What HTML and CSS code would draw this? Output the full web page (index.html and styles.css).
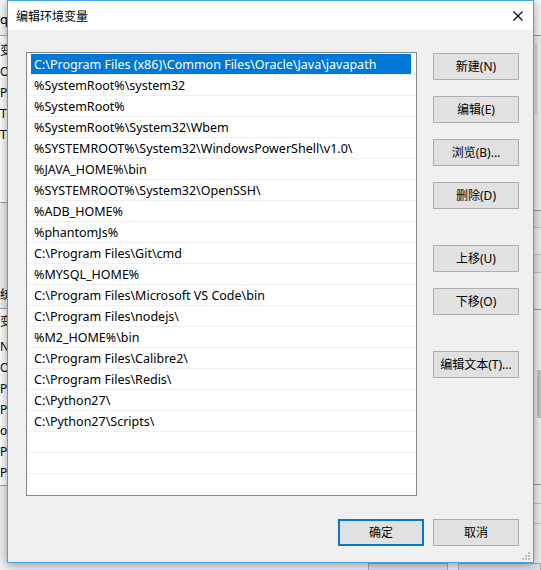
FILE: index.html
```html
<!DOCTYPE html>
<html lang="zh-CN">
<head>
<meta charset="utf-8">
<title>编辑环境变量</title>
<link rel="stylesheet" href="styles.css">
</head>
<body>
<div class="desktop">
  <div class="bgwin">
    <div class="bg-top">
      <div class="bg-left">
        <div class="bl-head">qi</div>
        <div class="bl-list bl-list1">
          <div class="bl-row">变</div>
          <div class="bl-row">O</div>
          <div class="bl-row">Pa</div>
          <div class="bl-row">TE</div>
          <div class="bl-row">TM</div>
        </div>
        <div class="bl-label">统</div>
        <div class="bl-list bl-list2">
          <div class="bl-row bl-first">变</div>
          <div class="bl-row">N</div>
          <div class="bl-row">O</div>
          <div class="bl-row">Pa</div>
          <div class="bl-row">PA</div>
          <div class="bl-row">ol</div>
          <div class="bl-row">PR</div>
          <div class="bl-row">PR</div>
        </div>
      </div>
      <div class="bg-mid"></div>
      <div class="bg-right">
        <div class="br-head"></div>
        <div class="br-box br-a"><span class="br-track"></span></div>
        <div class="br-line br-b"></div>
        <div class="br-line br-c"></div>
        <div class="br-line br-d"></div>
        <div class="br-line br-e"></div>
        <div class="br-box br-f"><span class="br-thumb"></span></div>
        <div class="br-line br-g"></div>
        <div class="br-line br-h"></div>
      </div>
    </div>
    <div class="bg-bottom">
      <div class="bg-btn"></div>
      <div class="bg-btn bg-btn-wide"></div>
    </div>
  </div>

  <div class="dialog">
    <div class="titlebar">
      <span class="title">编辑环境变量</span>
      <svg class="close" width="10" height="10" viewBox="0 0 10 10" aria-hidden="true">
        <path d="M0.5 0.5 L9.5 9.5 M9.5 0.5 L0.5 9.5" stroke="#000" stroke-width="1.1" fill="none"/>
      </svg>
    </div>
    <div class="dbody">
      <div class="main">
        <div class="list">
          <div class="row sel"><span class="cell">C:\Program Files (x86)\Common Files\Oracle\Java\javapath</span></div>
          <div class="row"><span class="cell">%SystemRoot%\system32</span></div>
          <div class="row"><span class="cell">%SystemRoot%</span></div>
          <div class="row"><span class="cell">%SystemRoot%\System32\Wbem</span></div>
          <div class="row"><span class="cell">%SYSTEMROOT%\System32\WindowsPowerShell\v1.0\</span></div>
          <div class="row"><span class="cell">%JAVA_HOME%\bin</span></div>
          <div class="row"><span class="cell">%SYSTEMROOT%\System32\OpenSSH\</span></div>
          <div class="row"><span class="cell">%ADB_HOME%</span></div>
          <div class="row"><span class="cell">%phantomJs%</span></div>
          <div class="row"><span class="cell">C:\Program Files\Git\cmd</span></div>
          <div class="row"><span class="cell">%MYSQL_HOME%</span></div>
          <div class="row"><span class="cell">C:\Program Files\Microsoft VS Code\bin</span></div>
          <div class="row"><span class="cell">C:\Program Files\nodejs\</span></div>
          <div class="row"><span class="cell">%M2_HOME%\bin</span></div>
          <div class="row"><span class="cell">C:\Program Files\Calibre2\</span></div>
          <div class="row"><span class="cell">C:\Program Files\Redis\</span></div>
          <div class="row"><span class="cell">C:\Python27\</span></div>
          <div class="row"><span class="cell">C:\Python27\Scripts\</span></div>
          <div class="row"><span class="cell"></span></div>
          <div class="row"><span class="cell"></span></div>
          <div class="row"><span class="cell"></span></div>
        </div>
        <div class="btncol">
          <div class="btn">新建(N)</div>
          <div class="btn">编辑(E)</div>
          <div class="btn">浏览(B)...</div>
          <div class="btn">删除(D)</div>
          <div class="btn btn-sep">上移(U)</div>
          <div class="btn">下移(O)</div>
          <div class="btn btn-sep">编辑文本(T)...</div>
        </div>
      </div>
      <div class="footer">
        <div class="btn btn-default">确定</div>
        <div class="btn">取消</div>
      </div>
    </div>
    <svg class="grip" width="9" height="9" viewBox="0 0 9 9" aria-hidden="true">
      <rect x="6" y="0" width="2" height="2" fill="#bdbdbd"/>
      <rect x="3" y="3" width="2" height="2" fill="#bdbdbd"/>
      <rect x="6" y="3" width="2" height="2" fill="#bdbdbd"/>
      <rect x="0" y="6" width="2" height="2" fill="#bdbdbd"/>
      <rect x="3" y="6" width="2" height="2" fill="#bdbdbd"/>
      <rect x="6" y="6" width="2" height="2" fill="#bdbdbd"/>
    </svg>
  </div>
</div>
</body>
</html>
```

FILE: styles.css
```css
* { box-sizing: border-box; }

html, body {
  margin: 0;
  padding: 0;
}

body {
  width: 541px;
  height: 570px;
  overflow: hidden;
  font-family: "Noto Sans", "Noto Sans CJK SC", sans-serif;
  font-size: 12px;
  color: #000;
}

.desktop {
  position: relative;
  width: 541px;
  height: 570px;
  overflow: hidden;
  background: #f0f0f0;
}

/* ---------- background window (only its edges are visible) ---------- */
.bgwin {
  display: flex;
  flex-direction: column;
  width: 541px;
  height: 570px;
}

.bg-top {
  display: flex;
  height: 563px;
}

.bg-left {
  width: 7px;
  overflow: hidden;
  white-space: nowrap;
  display: flex;
  flex-direction: column;
}

.bl-head {
  height: 36px;
  line-height: 38px;
  font-size: 13px;
  background: #f7f7f7;
  border-bottom: 1px solid #a8a8a8;
  padding-left: 0;
  letter-spacing: -1px;
}

.bl-list {
  background: #fff;
  border-bottom: 1px solid #a8a8a8;
}

.bl-list1 {
  height: 167px;
  padding-top: 4px;
}

.bl-row {
  height: 21px;
  line-height: 21px;
}

.bl-first {
  height: 24px;
  line-height: 20px;
}

.bl-label {
  height: 106px;
  padding-top: 84px;
  line-height: 16px;
  border-bottom: 1px solid #a8a8a8;
}

.bl-list2 {
  height: 177px;
  padding-top: 3px;
}

.bg-mid { flex: 1; }

.bg-right {
  width: 8px;
  display: flex;
  flex-direction: column;
}

.br-head {
  height: 36px;
  background: #f7f7f7;
  border-bottom: 1px solid #9a9a9a;
}

.br-box {
  display: flex;
  justify-content: flex-end;
}

.br-a {
  height: 175px;
  border-bottom: 1px solid #9a9a9a;
  padding-top: 8px;
}

.br-track {
  width: 2px;
  height: 70px;
  margin-right: 4px;
  background: #d6d6d6;
}

.br-line {
  border-bottom: 1px solid #c4c4c4;
}

.br-b { height: 17px; background: #e6e6e6; }
.br-c { height: 27px; }
.br-d { height: 18px; background: #e6e6e6; }
.br-e { height: 37px; border-bottom-color: #9a9a9a; }

.br-f {
  height: 175px;
  border-bottom: 1px solid #9a9a9a;
  padding-top: 60px;
}

.br-thumb {
  width: 4px;
  height: 48px;
  background: #c2c2c2;
}

.br-g { height: 19px; }
.br-h { height: 20px; }

.bg-bottom {
  display: flex;
  gap: 10px;
  height: 7px;
  padding-left: 368px;
}

.bg-btn {
  width: 86px;
  height: 12px;
  background: #e1e1e1;
  border: 1px solid #adadad;
}

.bg-btn-wide { width: 90px; }

/* ---------- dialog ---------- */
.dialog {
  position: absolute;
  left: 7px;
  top: 0;
  width: 527px;
  height: 563px;
  border: 1px solid #41a3ed;
  background: #f0f0f0;
  box-shadow: 0 2px 10px rgba(0, 0, 0, 0.38);
  display: flex;
  flex-direction: column;
}

.titlebar {
  height: 29px;
  flex: none;
  background: #fff;
  display: flex;
  align-items: center;
  justify-content: space-between;
  padding: 0 10px 0 8px;
}

.title {
  font-family: "Noto Sans CJK SC", sans-serif;
  font-size: 12px;
  line-height: 16px;
  margin-top: 1px;
}

.close { display: block; }

.dbody {
  flex: 1;
  display: flex;
  flex-direction: column;
  padding: 22px 14px 0 18px;
}

.main {
  display: flex;
  gap: 16px;
  align-items: flex-start;
}

.list {
  width: 391px;
  height: 444px;
  flex: none;
  background: #fff;
  border: 1px solid #828790;
  padding-top: 1px;
  overflow: hidden;
}

.row {
  height: 21px;
  padding: 0 5px 0 4px;
  border-bottom: 1px solid #f0f0f0;
}

.row:last-child { border-bottom: none; }

.cell {
  display: block;
  height: 20px;
  padding: 2px 0 0 3px;
  line-height: 18px;
  font-size: 12.5px;
  white-space: nowrap;
  overflow: hidden;
}

.row.sel .cell {
  background: #0078d7;
  color: #fff;
}

.btncol {
  display: flex;
  flex-direction: column;
  gap: 16px;
  margin-top: 1px;
  width: 86px;
  flex: none;
}

.btn {
  width: 86px;
  height: 27px;
  background: #e1e1e1;
  border: 1px solid #adadad;
  display: flex;
  align-items: center;
  justify-content: center;
  font-size: 12px;
  line-height: 16px;
  white-space: nowrap;
}

.btn-sep { margin-top: 20px; }

.btn-default {
  border: 2px solid #0078d7;
}

.footer {
  display: flex;
  justify-content: flex-end;
  gap: 9px;
  margin-top: 23px;
}

.grip {
  position: absolute;
  right: 2px;
  bottom: 1px;
}
```
